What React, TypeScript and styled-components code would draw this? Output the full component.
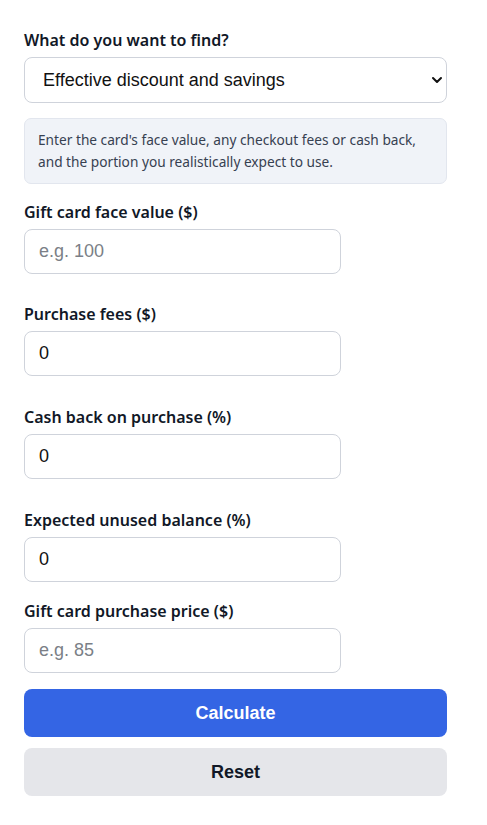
import React, { useState } from 'react'
import styled, { createGlobalStyle } from 'styled-components'

const GlobalStyle = createGlobalStyle`
  html, body {
    margin: 0;
    padding: 0;
    background: #ffffff;
  }
  body {
    font-family: "Noto Sans", "Open Sans", sans-serif;
    color: #111827;
  }
`

const Page = styled.div`
  width: 423px;
  padding: 29px 24px 24px;
`

const Label = styled.label`
  display: block;
  font-family: "Noto Sans", sans-serif;
  font-size: 16px;
  font-weight: 600;
  line-height: 22px;
  color: #111827;
  margin-bottom: 6px;
`

const Field = styled.div<{ $gap: number }>`
  margin-top: ${p => p.$gap}px;
`

const SelectWrap = styled.div`
  position: relative;
`

const Select = styled.select`
  appearance: none;
  width: 100%;
  height: 46px;
  box-sizing: border-box;
  border: 1px solid #cfd3db;
  border-radius: 8px;
  background: #fff;
  padding: 0 36px 0 18px;
  font-family: "Liberation Sans", Arial, sans-serif;
  font-size: 18px;
  color: #111;
  outline: none;
`

const Chevron = styled.svg`
  position: absolute;
  right: 4px;
  top: 17px;
  pointer-events: none;
`

const Info = styled.div`
  margin-top: 15px;
  background: #f0f3f8;
  border: 1px solid #e2e6ee;
  border-radius: 7px;
  padding: 10px 13px;
  font-size: 13.7px;
  line-height: 22px;
  color: #374151;
`

const Input = styled.input`
  display: block;
  width: 317px;
  height: 45px;
  box-sizing: border-box;
  border: 1px solid #cfd3db;
  border-radius: 8px;
  padding: 0 14px;
  font-family: "Liberation Sans", Arial, sans-serif;
  font-size: 18px;
  color: #111;
  outline: none;
  &::placeholder {
    color: #7b7f87;
  }
`

const Button = styled.button<{ $primary?: boolean }>`
  display: block;
  width: 100%;
  height: 48px;
  border: none;
  border-radius: 8px;
  font-family: "Liberation Sans", Arial, sans-serif;
  font-size: 18px;
  font-weight: 700;
  cursor: pointer;
  background: ${p => (p.$primary ? '#3465e4' : '#e5e6ea')};
  color: ${p => (p.$primary ? '#ffffff' : '#111827')};
  margin-top: ${p => (p.$primary ? '16px' : '11px')};
`

const fields = [
  { label: 'Gift card face value ($)', placeholder: 'e.g. 100', value: '', gap: 17 },
  { label: 'Purchase fees ($)', placeholder: '', value: '0', gap: 29 },
  { label: 'Cash back on purchase (%)', placeholder: '', value: '0', gap: 30 },
  { label: 'Expected unused balance (%)', placeholder: '', value: '0', gap: 30 },
  { label: 'Gift card purchase price ($)', placeholder: 'e.g. 85', value: '', gap: 18 },
]

export default function App() {
  const [values, setValues] = useState(fields.map(f => f.value))

  return (
    <Page>
      <GlobalStyle />
      <Label htmlFor="mode">What do you want to find?</Label>
      <SelectWrap>
        <Select id="mode" defaultValue="discount">
          <option value="discount">Effective discount and savings</option>
          <option value="price">Maximum purchase price</option>
        </Select>
        <Chevron width="12" height="12" viewBox="0 0 12 12">
          <path d="M2 4l4 4 4-4" fill="none" stroke="#111" strokeWidth="2" strokeLinecap="round" strokeLinejoin="round" />
        </Chevron>
      </SelectWrap>
      <Info>
        Enter the card's face value, any checkout fees or cash back, and the portion you realistically expect to use.
      </Info>
      {fields.map((f, i) => (
        <Field key={f.label} $gap={f.gap}>
          <Label>{f.label}</Label>
          <Input
            type="text"
            placeholder={f.placeholder}
            value={values[i]}
            onChange={e => {
              const next = [...values]
              next[i] = e.target.value
              setValues(next)
            }}
          />
        </Field>
      ))}
      <Button $primary>Calculate</Button>
      <Button onClick={() => setValues(fields.map(f => f.value))}>Reset</Button>
    </Page>
  )
}
